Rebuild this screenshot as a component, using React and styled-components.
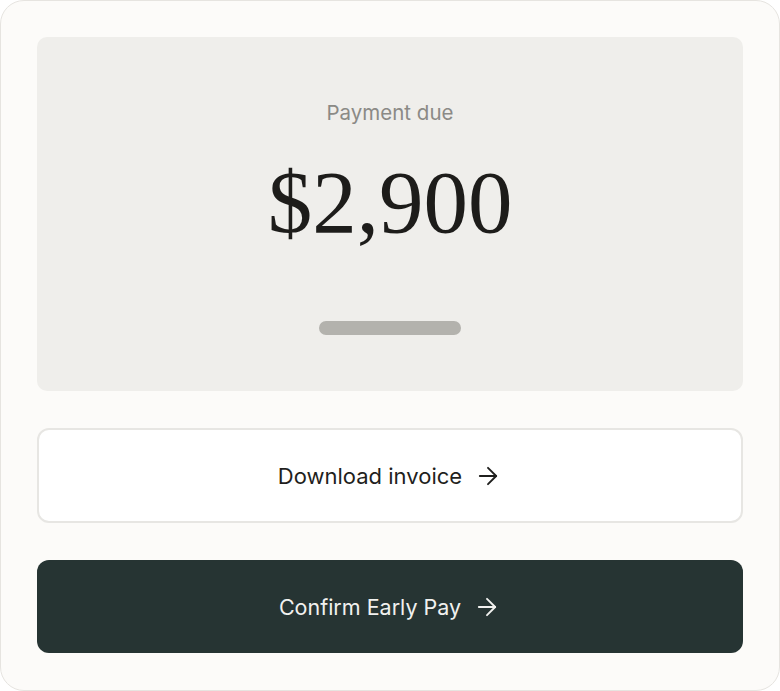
import styled, { createGlobalStyle } from 'styled-components';
import { ArrowRight } from 'lucide-react';

const GlobalStyle = createGlobalStyle`
   html, body {
      margin: 0;
      padding: 0;
      background: #ffffff;
   }
   * {
      box-sizing: border-box;
   }
`;

export default function App() {
   return (
      <>
         <GlobalStyle />
         <Card>
            <Summary>
               <Label>Payment due</Label>
               <Amount>$2,900</Amount>
               <Handle />
            </Summary>
            <Action variant="light">
               Download invoice
               <ArrowRight size={28} strokeWidth={1.6} />
            </Action>
            <Action variant="dark">
               Confirm Early Pay
               <ArrowRight size={28} strokeWidth={1.6} />
            </Action>
         </Card>
      </>
   );
}

const Card = styled.main`
   width: 780px;
   height: 691px;
   padding: 36px 36px 37px;
   display: flex;
   flex-direction: column;
   gap: 37px;
   background: #fcfbf9;
   border: 1px solid #e6e4e0;
   border-radius: 24px;
`;

const Summary = styled.section`
   height: 354px;
   display: flex;
   flex-direction: column;
   align-items: center;
   padding-top: 63px;
   background: #efeeeb;
   border-radius: 10px;
`;

const Label = styled.p`
   margin: 0;
   font-family: Inter, 'Noto Sans', sans-serif;
   font-size: 20.5px;
   line-height: 26px;
   color: #8b8a86;
`;

const Amount = styled.h1`
   margin: 26px 0 0;
   font-family: 'Liberation Serif', 'DejaVu Serif', serif;
   font-weight: 400;
   font-size: 89px;
   line-height: 100px;
   color: #1d1c1a;
`;

const Handle = styled.div`
   margin-top: 69px;
   width: 142px;
   height: 14px;
   border-radius: 7px;
   background: #b3b2ad;
`;

const Action = styled.button`
   flex: 0 0 ${({ variant }) => (variant === 'dark' ? '93px' : '95px')};
   display: flex;
   align-items: center;
   justify-content: center;
   gap: 12px;
   font-family: Inter, 'Noto Sans', sans-serif;
   font-size: ${({ variant }) => (variant === 'dark' ? '21.5px' : '22px')};
   font-weight: 400;
   cursor: pointer;
   border-radius: 12px;
   color: ${({ variant }) => (variant === 'dark' ? '#f1f1ef' : '#1f1f1d')};
   background: ${({ variant }) => (variant === 'dark' ? '#263433' : '#ffffff')};
   border: ${({ variant }) =>
      variant === 'dark' ? 'none' : '2px solid #e7e6e3'};
`;
